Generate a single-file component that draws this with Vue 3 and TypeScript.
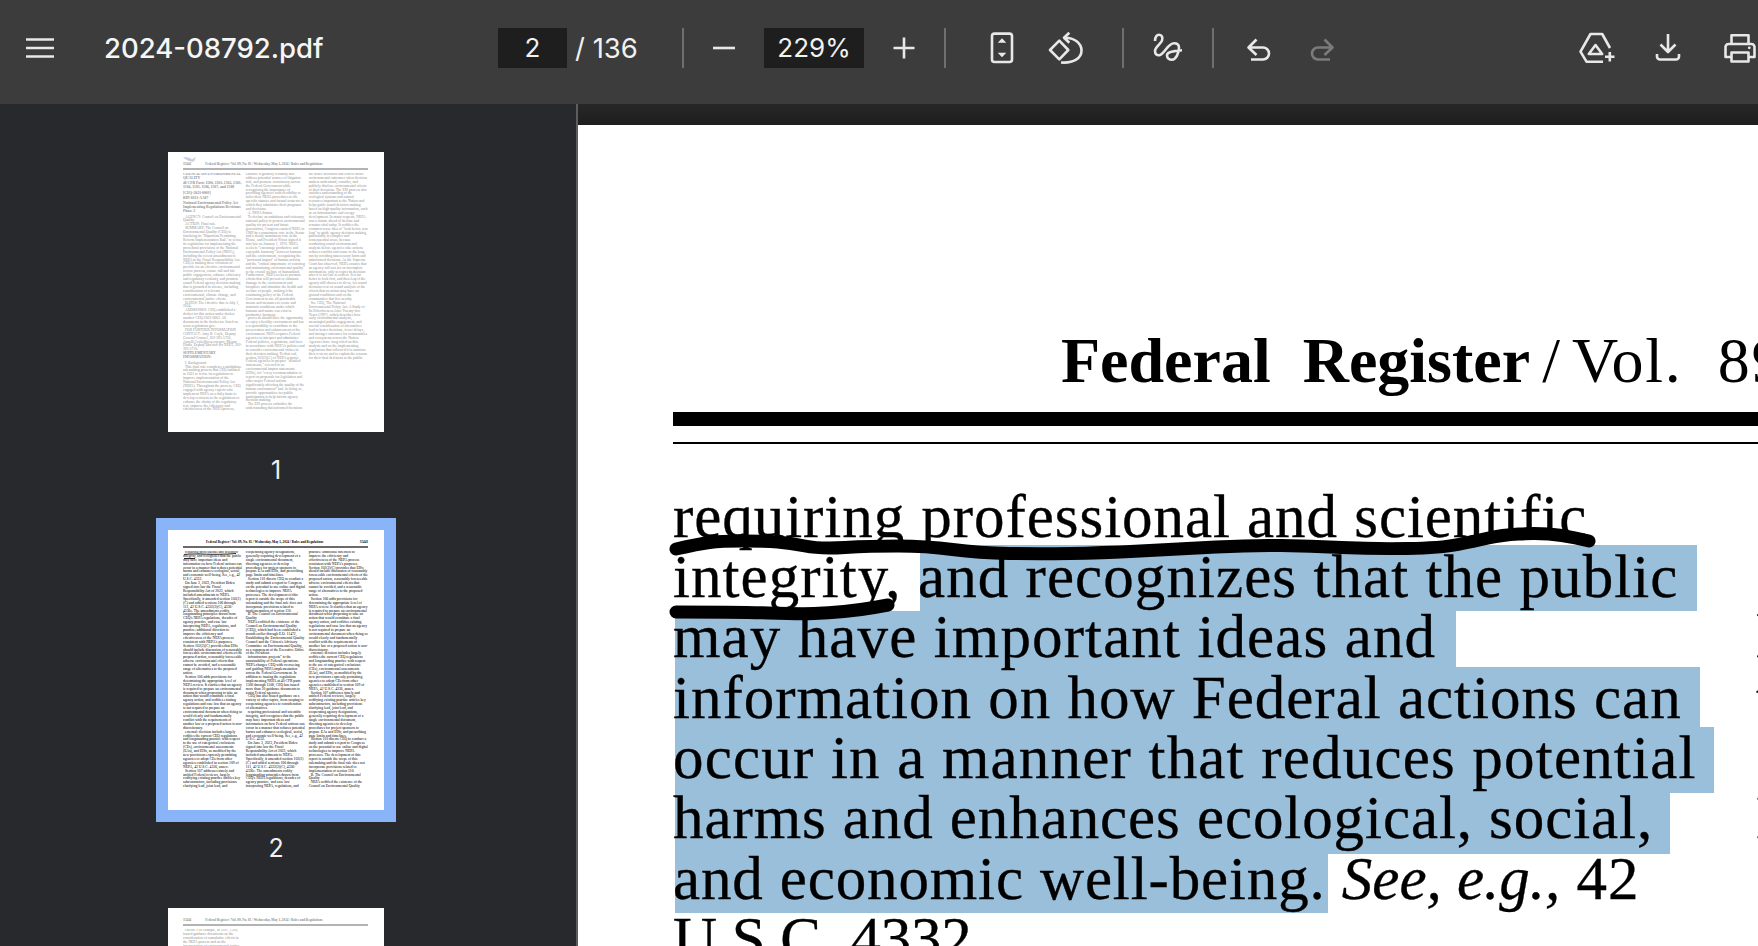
<script setup lang="ts">
interface Para {
  text: string;
  bold?: boolean;
}

interface Thumb {
  page: number;
  head: string;
  num: string;
  numFirst: boolean;
  faded: boolean;
  selected: boolean;
  paras: Para[];
}

interface Line {
  text: string;
  track: number;
}

const pageOne: Para[] = [
  { text: 'COUNCIL ON ENVIRONMENTAL QUALITY', bold: true },
  { text: '40 CFR Parts 1500, 1501, 1502, 1503, 1504, 1505, 1506, 1507, and 1508', bold: true },
  { text: '[CEQ-2023-0003]', bold: true },
  { text: 'RIN 0331-AA07', bold: true },
  { text: 'National Environmental Policy Act Implementing Regulations Revisions Phase 2', bold: true },
  { text: 'AGENCY: Council on Environmental Quality.' },
  { text: 'ACTION: Final rule.' },
  { text: 'SUMMARY: The Council on Environmental Quality (CEQ) is finalizing its "Bipartisan Permitting Reform Implementation Rule" to revise its regulations for implementing the procedural provisions of the National Environmental Policy Act (NEPA), including the recent amendments to NEPA in the Fiscal Responsibility Act. CEQ is making these revisions to provide for an effective environmental review process, ensure full and fair public engagement, enhance efficiency and regulatory certainty, and promote sound Federal agency decision making that is grounded in science, including consideration of relevant environmental, climate change, and environmental justice effects.' },
  { text: 'DATES: The effective date is July 1, 2024.' },
  { text: 'ADDRESSES: CEQ established a docket for this action under docket number CEQ-2023-0003. All documents in the docket are listed on www.regulations.gov.' },
  { text: 'FOR FURTHER INFORMATION CONTACT: Amy B. Coyle, Deputy General Counsel, 202-395-5750, Amy.B.Coyle@ceq.eop.gov; Megan Hinds, Deputy Director for NEPA, 202-395-5750.' },
  { text: 'SUPPLEMENTARY INFORMATION:', bold: true },
  { text: 'I. Background' },
  { text: 'This final rule completes a multiphase rulemaking process that CEQ initiated in 2021 to revise its regulations to improve implementation of the National Environmental Policy Act (NEPA). Throughout the process, CEQ engaged with agency experts who implement NEPA on a daily basis to develop revisions to the regulations to enhance the clarity of the regulatory text, improve the efficiency and effectiveness of the NEPA process, enhance regulatory certainty and address potential sources of litigation risk, and promote consistency across the Federal Government while recognizing the importance of providing agencies with flexibility to tailor their NEPA procedures to the specific statutes and factual contexts in which they administer their programs and decisions.' },
  { text: 'A. NEPA Statute' },
  { text: 'To declare an ambitious and visionary national policy to protect environmental quality for present and future generations, Congress enacted NEPA in 1969 by a unanimous vote in the Senate and a nearly unanimous vote in the House, and President Nixon signed it into law on January 1, 1970. NEPA seeks to "encourage productive and enjoyable harmony" between humans and the environment, recognizing the "profound impact" of human activity and the "critical importance of restoring and maintaining environmental quality" to the overall welfare of humankind. Furthermore, NEPA seeks to promote efforts that will prevent or eliminate damage to the environment and biosphere and stimulate the health and welfare of people, making it the continuing policy of the Federal Government to use all practicable means and measures to create and maintain conditions under which humans and nature can exist in productive harmony.' },
  { text: 'proceeds should have the opportunity to enjoy a healthy environment and has a responsibility to contribute to the preservation and enhancement of the environment. NEPA requires Federal agencies to interpret and administer Federal policies, regulations, and laws in accordance with NEPA\'s policies and to consider environmental values in their decision making. To that end, section 102(2)(C) of NEPA requires Federal agencies to prepare "detailed statements," referred to as environmental impact statements (EISs), for "every recommendation or report on proposals for legislation and other major Federal actions significantly affecting the quality of the human environment" and, in doing so, provide opportunities for public participation to help inform agency decision making.' },
  { text: 'The EIS process embodies the understanding that informed decisions are better decisions and lead to better environmental outcomes when decision makers understand, consider, and publicly disclose environmental effects of their decisions. The EIS process also enriches understanding of the ecological systems and natural resources important to the Nation and helps guide sound decision making based on high-quality information, such as on infrastructure and energy development. In many respects, NEPA was a statute ahead of its time and remains vital today. It codifies the common-sense idea of "look before you leap" to guide agency decision making, particularly in complex and consequential areas, because conducting sound environmental analysis before agencies take actions reduces conflict and waste in the long run by avoiding unnecessary harm and uninformed decisions. As the Supreme Court has observed, NEPA ensures that an agency will not act on incomplete information, only to regret its decision after it is too late to correct. It is far better to look first, and then leap if the agency still chooses to do so, for sound decisions rest on sound analysis of the effects that an action may have on ground conditions and on the communities that live nearby.' },
  { text: 'See CEQ, The National Environmental Policy Act: A Study of Its Effectiveness After Twenty-five Years (1997), which describes how early environmental analysis, meaningful public engagement, and careful consideration of alternatives lead to better decisions, fewer delays, and stronger outcomes for communities and ecosystems across the Nation. Agencies have long relied on this analysis and on the implementing regulations that followed it to structure their reviews and to explain the reasons for their final decisions to the public.' },
];

const pageTwo: Para[] = [
  { text: 'requiring professional and scientific integrity, and recognizes that the public may have important ideas and information on how Federal actions can occur in a manner that reduces potential harms and enhances ecological, social, and economic well-being. See, e.g., 42 U.S.C. 4332.' },
  { text: 'On June 3, 2023, President Biden signed into law the Fiscal Responsibility Act of 2023, which included amendments to NEPA. Specifically, it amended section 102(2)(C) and added sections 106 through 111, 42 U.S.C. 4332(2)(C), 4336-4336e. The amendments codify longstanding principles drawn from CEQ\'s NEPA regulations, decades of agency practice, and case law interpreting NEPA, regulations, and practice; additional direction to improve the efficiency and effectiveness of the NEPA process consistent with NEPA\'s purposes. Section 102(2)(C) provides that EISs should include discussion of reasonably foreseeable environmental effects of the proposed action, reasonably foreseeable adverse environmental effects that cannot be avoided, and a reasonable range of alternatives to the proposed action.' },
  { text: 'Section 106 adds provisions for determining the appropriate level of NEPA review. It clarifies that an agency is required to prepare an environmental document when proposing to take an action that would constitute a final agency action, and codifies existing regulations and case law that an agency is not required to prepare an environmental document when doing so would clearly and fundamentally conflict with the requirements of another law or a proposed action is non-discretionary.' },
  { text: 'external; decision includes largely codifies the current CEQ regulations and longstanding practice with respect to the use of categorical exclusions (CEs), environmental assessments (EAs), and EISs, as modified by the new provisions expressly permitting agencies to adopt CEs from other agencies established in section 109 of NEPA, 42 U.S.C. 4336, annex.' },
  { text: 'Section 107 addresses timely and unified Federal reviews, largely codifying existing practice articles key subcontractors, including provisions clarifying lead, joint lead, and cooperating agency designations, generally requiring development of a single environmental document, directing agencies to develop procedures for project sponsors to prepare EAs and EISs, and prescribing page limits and timelines.' },
  { text: 'Section 110 directs CEQ to conduct a study and submit a report to Congress on the potential to use online and digital technologies to improve NEPA processes. The development of this report is outside the scope of this rulemaking and the final rule does not incorporate provisions related to implementation of section 110.' },
  { text: 'B. The Council on Environmental Quality' },
  { text: 'NEPA codified the existence of the Council on Environmental Quality (CEQ), which had been established a month earlier through E.O. 11472, Establishing the Environmental Quality Council and the Citizen\'s Advisory Committee on Environmental Quality, as a component of the Executive Office of the President.' },
  { text: 'infrastructure projects" to the sustainability of Federal operations. NEPA charges CEQ with overseeing and guiding NEPA implementation across the Federal Government. In addition to issuing the regulations implementing NEPA at 40 CFR parts 1500 through 1508, CEQ has issued more than 30 guidance documents to assist Federal agencies.' },
  { text: 'CEQ has also issued guidance on a variety of other topics, from scoping to cooperating agencies to consideration of alternatives.' },
];

const pageThree: Para[] = [
  { text: 'effects.  For example, in 1997, CEQ issued guidance documents on the consideration of cumulative effects in the NEPA process and on the incorporation of environmental justice in the NEPA process under E.O. 12898, Federal Actions to Address Environmental Justice.' },
  { text: 'CEQ has issued guidance to integrate NEPA reviews with other environmental review requirements such as the National Historic Preservation Act, E.O. 11988, Floodplain Management and the Endangered Species Act.' },
  { text: 'agencies. This rule is particularly important for ensuring that these multiple agencies and applicants are regularly involved, such as the review of infrastructure projects.' },
];

const thumbs: Thumb[] = [
  { page: 1, head: 'Federal Register / Vol. 89, No. 85 / Wednesday, May 1, 2024 / Rules and Regulations', num: '35442', numFirst: true, faded: true, selected: false, paras: pageOne },
  { page: 2, head: 'Federal Register / Vol. 89, No. 85 / Wednesday, May 1, 2024 / Rules and Regulations', num: '35443', numFirst: false, faded: false, selected: true, paras: [...pageTwo, ...pageTwo] },
  { page: 3, head: 'Federal Register / Vol. 89, No. 85 / Wednesday, May 1, 2024 / Rules and Regulations', num: '35444', numFirst: true, faded: true, selected: false, paras: pageThree },
];

// letter spacing per line, so the line ends fall where the PDF has them
const leadLines: Line[] = [
  { text: 'requiring professional and scientific', track: 0.95 },
  { text: 'integrity, and recognizes that the public', track: 1.07 },
  { text: 'may have important ideas and', track: 1.12 },
  { text: 'information on how Federal actions can', track: 1.0 },
  { text: 'occur in a manner that reduces potential', track: 1.2 },
  { text: 'harms and enhances ecological, social,', track: 0.92 },
];

const nextColumn = [
  'external; decision includes largely',
  'codifies the current CEQ regulations and',
  'longstanding practice with respect to',
  'the use of categorical exclusions (CEs),',
  'environmental assessments (EAs), and',
  'EISs, as modified by the new provisions',
  'expressly permitting agencies to adopt',
  'CEs from other agencies established in',
];

// selection rects in screen px, the page sits at 578,125
const pageX = 578;
const pageY = 125;
const selection = [
  [920, 545, 1697, 611],
  [675, 611, 1456, 667],
  [675, 667, 1700, 727],
  [675, 727, 1714, 793],
  [675, 793, 1670, 854],
  [675, 854, 1328, 913],
];

function rectStyle(r: number[]) {
  return {
    left: `${r[0] - pageX}px`,
    top: `${r[1] - pageY}px`,
    width: `${r[2] - r[0]}px`,
    height: `${r[3] - r[1]}px`,
  };
}

// pen strokes over the text, smoothed through midpoints
function smooth(points: number[][]) {
  let d = `M${points[0][0]} ${points[0][1]}`;
  for (let i = 1; i < points.length - 1; i++) {
    const mx = (points[i][0] + points[i + 1][0]) / 2;
    const my = (points[i][1] + points[i + 1][1]) / 2;
    d += `Q${points[i][0]} ${points[i][1]} ${mx} ${my}`;
  }
  const last = points[points.length - 1];
  return `${d}L${last[0]} ${last[1]}`;
}

const inkStrokes = [
  smooth([
    [676, 549], [698, 544], [721, 541], [765, 541], [790, 543], [820, 549], [870, 546], [926, 546],
    [979, 553], [1040, 554], [1100, 553], [1180, 549], [1252, 545], [1310, 546], [1373, 549],
    [1441, 548], [1475, 541], [1502, 535], [1535, 533], [1562, 535], [1589, 541],
  ]),
  smooth([[676, 612], [737, 612], [800, 614], [828, 613], [860, 610], [888, 605]]),
];
</script>

<template>
  <div class="viewer">
    <header class="toolbar">
      <div class="left">
        <svg class="icon" viewBox="0 0 40 40">
          <path d="M6 11.500H34M6 20H34M6 28.500H34" />
        </svg>
        <span class="title">2024-08792.pdf</span>
      </div>

      <span class="num-box page-box">2</span>
      <span class="total">/ 136</span>
      <span class="sep sep-a"></span>
      <svg class="icon ml-20" viewBox="0 0 40 40"><path d="M9 20H31" /></svg>
      <span class="num-box zoom-box">229%</span>
      <svg class="icon ml-20" viewBox="0 0 40 40"><path d="M9.500 20H30.500M20 9.500V30.500" /></svg>
      <span class="sep ml-20"></span>

      <svg class="icon ml-36" viewBox="0 0 40 40">
        <rect x="10" y="5.600" width="20" height="28.400" rx="2.500" />
        <path class="solid" d="M20 10.300 24.300 14.700H15.700ZM20 29.300 15.700 24.700H24.300Z" />
      </svg>
      <svg class="icon ml-23" viewBox="0 0 40 40">
        <path d="M14.300 12.700 23.300 22 14.300 31.300 5 22Z" />
        <path d="M24.300 4.700 19 9.700 24.300 14.700M20 9.700C29 9.700 36.500 15 36.500 22.500S29 35.500 16 34.500" />
      </svg>
      <span class="sep ml-37"></span>

      <svg class="icon ml-24" viewBox="0 0 40 40">
        <path d="M7 13C7 9 9 6.700 11 6.700c3 0 4 3 3 6S7 19 7 23c0 3 2 5 5 4 5-2 8-11.700 14-11.700 3.500 0 5 2 5 4.500 0 5-3 12-7 12-3 0-5-2-5-4.500 0-3 5-4 15-5" />
      </svg>
      <span class="sep ml-24"></span>

      <svg class="icon ml-25" viewBox="0 0 40 40">
        <path d="M17.500 11.500 9.500 19.500 17.500 27M10 19.500H24a6 6 0 0 1 0 12H12" />
      </svg>
      <svg class="icon ml-23 disabled" viewBox="0 0 40 40">
        <path d="M22.500 11.500 30.500 19.500 22.500 27M30 19.500H16a6 6 0 0 0 0 12H28" />
      </svg>

      <div class="right">
        <svg class="icon" viewBox="0 0 40 40">
          <path d="M33 20 25.200 6H13.500L3.500 23.700 9.500 33.700H26M18.500 17 25.200 26H11.800Z" />
          <path d="M28 28.700H37.500M32.800 24V33.500" />
        </svg>
        <svg class="icon ml-31" viewBox="0 0 40 40">
          <path d="M20 6V24M12.500 16.500 20 24 27.500 16.500M9 26V28.500a3 3 0 0 0 3 3H28a3 3 0 0 0 3-3V26" />
        </svg>
        <svg class="icon ml-32" viewBox="0 0 40 40">
          <path d="M11.500 16V7.300H28.500V16M11.500 29H5.500V19a3 3 0 0 1 3-3H31.500a3 3 0 0 1 3 3V29H28.500" />
          <rect x="11.500" y="24.500" width="17" height="9" />
          <circle class="solid" cx="29.300" cy="19.800" r="1.400" />
        </svg>
      </div>
    </header>

    <div class="body">
      <aside class="sidebar">
        <div v-for="t in thumbs" :key="t.page" class="thumb-item">
          <div class="thumb-frame" :class="{ selected: t.selected }">
            <div class="thumb" :class="{ faded: t.faded }">
              <svg v-if="t.page === 1" class="thumb-logo" viewBox="0 0 14 6">
                <path d="M0 1.500C4 1 7 2 9 3.500L13 0.500 11 5.500C8 6 3 4 0 1.500Z" />
              </svg>
              <div class="thumb-head">
                <span v-if="t.numFirst" class="thumb-num">{{ t.num }}</span>
                <span class="thumb-head-text" :class="{ pushed: !t.numFirst }">{{ t.head }}</span>
                <span v-if="!t.numFirst" class="thumb-num">{{ t.num }}</span>
              </div>
              <div class="thumb-rule"></div>
              <div class="thumb-cols">
                <p v-for="(p, i) in t.paras" :key="i" :class="{ strong: p.bold }">{{ p.text }}</p>
              </div>
              <svg v-if="t.selected" class="thumb-ink" viewBox="0 0 216 280">
                <path d="M16 24.500C30 23 45 25.500 68 23.500M16 28.500H27" />
              </svg>
            </div>
          </div>
          <div class="thumb-label">{{ t.page }}</div>
        </div>
      </aside>

      <main class="doc">
        <article class="page">
          <div
            v-for="(r, i) in selection"
            :key="i"
            class="selection"
            :style="rectStyle(r)"
          ></div>

          <div class="running-head"><b>Federal&nbsp; Register</b><span class="slash">/</span><span class="vol">Vol.&nbsp; 89, No. 85 / Wednesday, May 1, 2024 / Rules and Regulations</span></div>
          <div class="rule-thick"></div>
          <div class="rule-thin"></div>

          <div class="columns">
            <div class="column">
              <div
                v-for="l in leadLines"
                :key="l.text"
                class="line"
                :style="{ letterSpacing: `${l.track}px` }"
              >{{ l.text }}</div>
              <div class="line last-sentence">and economic well-being. <i>See, e.g.,</i> <span class="cite">42</span></div>
              <div class="line usc">U.S.C. 4332.</div>
            </div>
            <div class="column">
              <div v-for="l in nextColumn" :key="l" class="line">{{ l }}</div>
            </div>
          </div>

          <svg class="ink" viewBox="578 125 1180 821">
            <path v-for="(d, i) in inkStrokes" :key="i" :d="d" />
          </svg>
        </article>
      </main>
    </div>
  </div>
</template>

<style>
html,
body {
  margin: 0;
  background: #202020;
}
</style>

<style scoped>
.viewer {
  width: 1758px;
  height: 946px;
  overflow: hidden;
  display: flex;
  flex-direction: column;
  font-family: Inter, "Noto Sans", sans-serif;
  color: #f1f1f1;
}

.toolbar {
  flex: none;
  height: 96px;
  padding-bottom: 8px;
  display: flex;
  align-items: center;
  background: #3c3c3c;
}

.left {
  flex: none;
  width: 498px;
  display: flex;
  align-items: center;
  padding-left: 20px;
  box-sizing: border-box;
}

.title {
  margin-left: 44px;
  font-size: 27.500px;
  font-weight: 500;
  color: #f6f6f6;
}

.icon {
  flex: none;
  width: 40px;
  height: 40px;
  fill: none;
  stroke: #e8e8e8;
  stroke-width: 2.600;
  stroke-linejoin: round;
}

.icon .solid {
  fill: #e8e8e8;
  stroke: none;
}

.icon.disabled {
  stroke: #7b7b7b;
}

.num-box {
  flex: none;
  height: 40px;
  line-height: 40px;
  background: #1e1e1e;
  text-align: center;
  font-size: 26px;
}

.page-box {
  width: 69px;
}

.zoom-box {
  width: 100px;
  margin-left: 20px;
}

.total {
  margin-left: 8px;
  width: 62px;
  font-size: 27.500px;
  white-space: nowrap;
}

.sep {
  flex: none;
  width: 2px;
  height: 40px;
  background: #6f6f6f;
}

.sep-a {
  margin-left: 45px;
}

.ml-20 { margin-left: 20px; }
.ml-23 { margin-left: 23px; }
.ml-24 { margin-left: 24px; }
.ml-25 { margin-left: 25px; }
.ml-31 { margin-left: 31px; }
.ml-32 { margin-left: 32px; }
.ml-36 { margin-left: 36px; }
.ml-37 { margin-left: 37px; }

.right {
  flex: none;
  margin-left: auto;
  margin-right: -2px;
  display: flex;
  align-items: center;
}

.body {
  flex: 1;
  min-height: 0;
  display: flex;
}

.sidebar {
  flex: none;
  width: 576px;
  box-sizing: border-box;
  padding: 36px 24px 0 0;
  background: #28292c;
  display: flex;
  flex-direction: column;
  align-items: center;
  overflow: hidden;
}

.thumb-item {
  flex: none;
  width: 240px;
  height: 378px;
}

.thumb-frame {
  padding: 12px;
}

.thumb-frame.selected {
  background: #8ab4f8;
}

.thumb {
  position: relative;
  width: 216px;
  height: 280px;
  background: #fff;
  color: #000;
  font-family: "Liberation Serif", serif;
  font-size: 3.700px;
  line-height: 3.900px;
  overflow: hidden;
  box-sizing: border-box;
  padding: 11px 16px 0 15px;
}

.thumb.faded {
  color: #8f8f8f;
}

.thumb-logo {
  position: absolute;
  left: 15px;
  top: 4px;
  width: 14px;
  height: 6px;
  fill: #c3cfe0;
}

.thumb-head {
  display: flex;
  white-space: nowrap;
  font-size: 3.300px;
  font-weight: 700;
}

.thumb-num {
  flex: none;
}

.thumb-head-text {
  margin-left: 14px;
}

.thumb-head-text.pushed {
  margin-left: 23px;
  margin-right: auto;
}

.thumb-rule {
  height: 2.500px;
  margin-top: 1px;
  background: #6a6a6a;
}

.thumb.faded .thumb-rule {
  background: #b3b3b3;
}

.thumb-cols {
  margin-top: 2.500px;
  height: 240px;
  column-count: 3;
  column-gap: 3.500px;
  column-fill: auto;
  overflow: hidden;
}

.thumb-cols p {
  margin: 0;
  text-indent: 2px;
}

.thumb-cols p.strong {
  margin-bottom: 1.500px;
  font-weight: 700;
  text-indent: 0;
}

.thumb-ink {
  position: absolute;
  inset: 0;
  width: 216px;
  height: 280px;
  fill: none;
  stroke: #111;
  stroke-width: 0.900;
}

.thumb-label {
  margin-top: 11px;
  line-height: 30px;
  text-align: center;
  font-size: 25px;
  color: #f1f1f1;
}

.doc {
  flex: 1;
  min-width: 0;
  border-left: 2px solid #5d5d5d;
  padding-top: 21px;
  background: linear-gradient(#272727, #1e1e1e 21px);
}

.page {
  position: relative;
  height: 100%;
  box-sizing: border-box;
  padding: 200px 0 0 95px;
  background: #fff;
  color: #000;
  font-family: "Liberation Serif", serif;
  overflow: hidden;
}

.selection {
  position: absolute;
  background: #9abfdb;
}

.running-head {
  position: relative;
  margin-left: 388px;
  font-size: 64px;
  line-height: 72px;
  white-space: pre;
}

.slash {
  margin: 0 12px;
}

.vol {
  letter-spacing: 1.700px;
}

.rule-thick {
  height: 14px;
  margin-top: 15px;
  background: #000;
}

.rule-thin {
  height: 2px;
  margin-top: 16px;
  background: #000;
}

.columns {
  position: relative;
  display: flex;
  margin-top: 42.500px;
}

.column {
  flex: none;
  width: 1083px;
}

.line {
  height: 60.400px;
  font-size: 61px;
  line-height: 60.400px;
  letter-spacing: 1.100px;
  -webkit-text-stroke: 0.350px #000;
  white-space: nowrap;
}

.last-sentence {
  letter-spacing: 0.870px;
}

.last-sentence i {
  letter-spacing: 0;
}

.last-sentence .cite {
  letter-spacing: 1.100px;
}

.usc {
  letter-spacing: -0.300px;
}

.ink {
  position: absolute;
  left: 0;
  top: 0;
  width: 1180px;
  height: 821px;
  fill: none;
  stroke: #000;
  stroke-width: 13;
  stroke-linecap: round;
  stroke-linejoin: round;
}
</style>
